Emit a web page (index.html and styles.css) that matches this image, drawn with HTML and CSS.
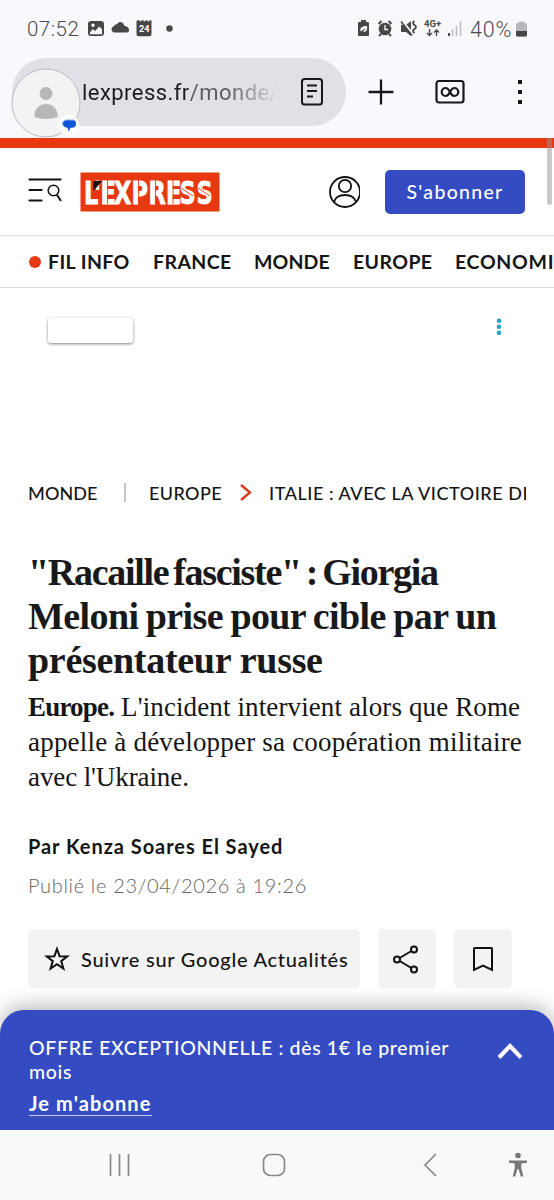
FILE: index.html
```html
<!DOCTYPE html>
<html lang="fr">
<head>
    <meta charset="UTF-8">
    <meta name="viewport" content="width=device-width, initial-scale=1.0">
    <title>L'Express</title>
    <link rel="stylesheet" href="styles.css">
</head>
<body>
    <div class="browser">
        <div class="status-bar">
            <span class="time">07:52</span>
            <svg class="status-left" width="92" height="20" viewBox="0 0 92 20" fill="#47474a">
                <path fill-rule="evenodd" d="M3 2h10q3 0 3 3v9q0 3-3 3H3q-3 0-3-3V5q0-3 3-3zM2 13.500v1.800h12v-5l-2.800-2.800-4 4.500-2.500-2zM5 4.500a1.700 1.700 0 1 0 .01 0z"/>
                <path d="M26.500 13.500a3.200 3.200 0 0 1-.5-6.300 3 3 0 0 1 3-2q2-3.200 5-1.700 2 1 2.300 3.200 4.200.5 4.700 4.300.2 2.500-2.500 2.500z"/>
                <path d="M50 2h2v1h2V2h2v1h2V2h2v1h2V2h2v14q0 2-2 2H51q-2 0-2-2V3z" transform="translate(-.5 -.8)"/>
                <text x="51" y="13" class="calendar-day">24</text>
                <circle cx="81.500" cy="9.500" r="3.200"/>
            </svg>
            <svg class="status-right" width="112" height="20" viewBox="0 0 112 20" fill="#47474a">
                <path d="M4 1h5v2h2q1 0 1 1v12q0 1-1 1H2q-1 0-1-1V4q0-1 1-1h2z"/>
                <path d="M3.500 12.500Q2 7 10 7q1 6-4 6l3-4z" fill="#fff"/>
                <circle cx="28" cy="10" r="6.300"/>
                <path d="M24 15l-2 2M32 15l2 2M21.500 5l3-3M34.500 5l-3-3" stroke="#47474a" stroke-width="2"/>
                <path d="M28 6v4.500h3" fill="none" stroke="#fff" stroke-width="1.300"/>
                <path d="M44 6h5l5-4v15l-5-4h-5z"/>
                <path d="M45 2l12 14" stroke="#f9f9fd" stroke-width="2"/>
                <path d="M44 2.500l11 14" stroke="#47474a" stroke-width="1.600"/>
                <path d="M57.500 2q-3 2 0 4t0 4 0 4" fill="none" stroke="#47474a" stroke-width="1.800"/>
                <text x="67" y="8" class="network">4G+</text>
                <path d="M72.500 10v6.500m-2.500-2.500l2.500 2.500 2.500-2.500M79.500 17v-6m-2.500 2.500l2.500-2.500 2.500 2.500" fill="none" stroke="#47474a" stroke-width="1.400"/>
                <path d="M92 14v3" stroke="#47474a" stroke-width="2"/>
                <path d="M95.500 10v7M99.500 6.500v10.500M103.500 2.500v14.500" stroke="#bdbdc1" stroke-width="1.600"/>
            </svg>
            <span class="battery-level">40%</span>
            <svg width="12" height="18" viewBox="0 0 12 18">
                <path d="M3 1.500h5V3h1.500q1.500 0 1.500 1.500V15q0 1.500-1.500 1.500h-8Q0 16.500 0 15V4.500Q0 3 1.500 3H3z" fill="#b7b7bb"/>
                <path d="M0 11h11v4q0 1.500-1.500 1.500h-8Q0 16.500 0 15z" fill="#47474a"/>
            </svg>
        </div>
        <div class="toolbar">
            <div class="address-bar">
                <span class="url">lexpress.fr<span class="path">/monde/</span></span>
                <svg width="24" height="30" viewBox="0 0 24 30" fill="none" stroke="#17171c" stroke-width="2">
                    <rect x="2" y="2" width="20" height="25.500" rx="2.500"/>
                    <path d="M7 8.500h10M7 14h10M7 19.500h6"/>
                </svg>
            </div>
            <svg class="plus" width="26" height="26" viewBox="0 0 26 26" stroke="#17171c" stroke-width="2.300">
                <path d="M13 .5v25M.5 13h25"/>
            </svg>
            <svg class="tabs" width="30" height="26" viewBox="0 0 30 26" fill="none" stroke="#17171c">
                <rect x="1.500" y="2" width="27" height="21.500" rx="2.500" stroke-width="2.200"/>
                <path d="M15 13Q13 9 10.700 9A3.900 3.900 0 0 0 10.700 17Q13 17 15 13T19.300 9A3.900 3.900 0 0 1 19.300 17Q17 17 15 13z" stroke-width="2.200"/>
            </svg>
            <svg class="more" width="6" height="26" viewBox="0 0 6 26" fill="#17171c">
                <path d="M1 1h4v4H1zM1 11h4v4H1zM1 21h4v4H1z"/>
            </svg>
        </div>
        <div class="chat-head">
            <svg width="70" height="70" viewBox="0 0 70 70">
                <circle cx="35" cy="35" r="34" fill="#f3f3f3" stroke="#bcbcbc"/>
                <circle cx="35" cy="25.500" r="6.500" fill="#b5b8b7"/>
                <path d="M23.500 49v-2a11.500 11 0 0 1 23 0v2q-11.500 4-23 0z" fill="#b5b8b7"/>
                <circle cx="58" cy="57.500" r="10.500" fill="#fff"/>
                <path d="M55 51.500h7q3 0 3 3t-3 4h-4.500q-7 0-6.500-3t4-4z" fill="#7aa5f8"/>
                <path d="M56 52.500h5q4 0 4 3.500t-4 3.700h-1.500l-1.800 4-1-4q-4.500 0-4.500-3.700t3.800-3.500z" fill="#1056d8"/>
            </svg>
        </div>
    </div>

    <header class="site-header">
        <svg width="36" height="28" viewBox="0 0 36 28" fill="none" stroke="#111">
            <path d="M2.500 1.500h31M2.500 12h12M2.500 22.500h12" stroke-width="2.200" stroke-linecap="round"/>
            <circle cx="26.500" cy="12.500" r="5.300" stroke-width="1.500"/>
            <path d="M30 17l4 6" stroke-width="2"/>
        </svg>
        <svg class="logo" width="140" height="40" viewBox="0 0 140 40">
            <rect x=".5" y=".5" width="139" height="39" fill="#e8380f"/>
            <text transform="translate(0 32) scale(1 1.300)" x="4 14 20.500 34 51.500 68.500 86 99.500 116.500" y="0">L'EXPRESS</text>
            <path d="M27.600 8v24M58.600 8v24M75.600 8v24M93.100 8v24M101 16l12 8M118 16l12 8" stroke="#e8380f" stroke-width=".9"/>
            <path d="M13.500 9h8.500l-8.500 10z" fill="#111"/>
        </svg>
        <svg class="account" width="32" height="34" viewBox="0 0 32 34" fill="none" stroke="#111" stroke-width="1.800">
            <circle cx="17" cy="17" r="15"/>
            <circle cx="17" cy="11" r="6.200"/>
            <path d="M6 27q2-7 11-7t11 7"/>
        </svg>
        <a class="subscribe">S'abonner</a>
    </header>
    <nav class="main-nav">
        <a class="live">FIL INFO</a>
        <a class="france">FRANCE</a>
        <a class="monde">MONDE</a>
        <a class="europe">EUROPE</a>
        <a class="economie">ECONOMIE</a>
    </nav>

    <div class="ad">
        <div class="ad-label"></div>
        <svg width="6" height="18" viewBox="0 0 6 18" fill="#22a5c5">
            <circle cx="3" cy="2.800" r="2.300"/>
            <circle cx="3" cy="8.800" r="2.300"/>
            <circle cx="3" cy="14.800" r="2.300"/>
        </svg>
    </div>

    <main class="article">
        <div class="breadcrumb">
            <a class="crumb-monde">MONDE</a>
            <span class="separator"></span>
            <a class="crumb-europe">EUROPE</a>
            <svg width="12" height="18" viewBox="0 0 12 18" fill="none" stroke="#dc3a1c" stroke-width="2.400">
                <path d="M1 1l9 7.500L1 16"/>
            </svg>
            <a class="crumb-tag">ITALIE : AVEC LA VICTOIRE DE</a>
        </div>
        <h1>
            <span class="t1">"Racaille fasciste" : Giorgia</span>
            <span class="t2">Meloni prise pour cible par un</span>
            <span class="t3">présentateur russe</span>
        </h1>
        <p class="lead">
            <span class="l1"><strong>Europe.</strong> L'incident intervient alors que Rome</span>
            <span class="l2">appelle à développer sa coopération militaire</span>
            <span class="l3">avec l'Ukraine.</span>
        </p>
        <p class="author">Par Kenza Soares El Sayed</p>
        <p class="date">Publié le 23/04/2026 à 19:26</p>
        <div class="actions">
            <a class="follow">
                <svg width="26" height="26" viewBox="0 0 26 26" fill="none" stroke="#111" stroke-width="2">
                    <path d="M13 3l2.600 7.200 7.700.2-6.100 4.700 2.200 7.400-6.400-4.300-6.400 4.300 2.200-7.400-6.100-4.700 7.700-.2z"/>
                </svg>
                <span>Suivre sur Google Actualités</span>
            </a>
            <a class="icon-btn">
                <svg width="28" height="30" viewBox="0 0 28 30" fill="none" stroke="#111" stroke-width="2">
                    <circle cx="4" cy="15.500" r="3"/>
                    <circle cx="21" cy="5.500" r="3"/>
                    <circle cx="21" cy="25.500" r="3"/>
                    <path d="M6.600 14L18.400 7M6.600 17l11.800 7"/>
                </svg>
            </a>
            <a class="icon-btn">
                <svg width="22" height="28" viewBox="0 0 22 28" fill="none" stroke="#111" stroke-width="2">
                    <path d="M2 25V3.500Q2 3 2.500 3h17q.5 0 .5.500V25l-9-4.300z"/>
                </svg>
            </a>
        </div>
    </main>

    <div class="offer">
        <div class="offer-text">
            <p><span class="offer-title">OFFRE EXCEPTIONNELLE : dès 1€ le premier</span> mois</p>
            <a>Je m'abonne</a>
        </div>
        <svg width="26" height="18" viewBox="0 0 26 18" fill="none" stroke="#fff" stroke-width="4">
            <path d="M2 15.500L13 4l11 11.500"/>
        </svg>
    </div>

    <div class="system-nav">
        <svg class="recents" width="22" height="24" viewBox="0 0 22 24" stroke="#89898d" stroke-width="1.700">
            <path d="M2.500 1v22M11.500 1v22M20.500 1v22"/>
        </svg>
        <svg class="home" width="24" height="24" viewBox="0 0 24 24" fill="none" stroke="#89898d" stroke-width="1.700">
            <rect x="1.500" y="1.500" width="21" height="21" rx="7"/>
        </svg>
        <svg class="back" width="14" height="24" viewBox="0 0 14 24" fill="none" stroke="#89898d" stroke-width="1.700">
            <path d="M13 1L2 12l11 11"/>
        </svg>
        <svg class="access" width="20" height="26" viewBox="0 0 20 26" fill="#77777b">
            <circle cx="10" cy="3.500" r="2.800"/>
            <path d="M1 8.500h18v2.300l-5.700.8V16l2 8.500h-2.500L10.500 17h-1l-2.300 7.500H4.700l2-8.500v-4.400L1 10.800z"/>
        </svg>
    </div>
    <div class="scrollbar"></div>
</body>
</html>
```
FILE: styles.css
```css
* {
    box-sizing: border-box;
}
body {
    position: relative;
    width: 554px;
    height: 1200px;
    margin: 0;
    overflow: hidden;
    background-color: #fff;
    color: #151515;
    font-family: Lato, sans-serif;
}
p, h1 {
    margin: 0;
}
svg {
    display: block;
    flex-shrink: 0;
}

/* Navigateur */
.browser {
    position: relative;
    height: 138px;
    background-color: #f9f9fd;
}
.status-bar {
    display: flex;
    align-items: center;
    height: 58px;
    padding: 0 26px 0 27px;
    color: #4b4b4e;
    font-family: Roboto, sans-serif;
    font-size: 20.5px;
    font-weight: 300;
}
.time {
    width: 61px;
    letter-spacing: 0.5px;
}
.status-right {
    margin-left: auto;
    margin-right: 1px;
}
.battery-level {
    width: 46px;
    font-size: 21.5px;
    letter-spacing: 0.8px;
}
.calendar-day {
    fill: #fff;
    font: bold 9px Roboto, sans-serif;
}
.network {
    font: bold 9.5px Roboto, sans-serif;
}
.toolbar {
    display: flex;
    align-items: center;
    height: 68px;
    padding-left: 12px;
}
.address-bar {
    display: flex;
    align-items: center;
    width: 334px;
    height: 68px;
    padding-left: 70px;
    border-radius: 34px;
    background-color: #e1e0e6;
}
.url {
    width: 195px;
    margin-right: 23px;
    overflow: hidden;
    color: #1c1b20;
    font-family: Roboto, sans-serif;
    font-size: 22px;
    letter-spacing: 0.45px;
    white-space: nowrap;
    -webkit-mask-image: linear-gradient(to right, #000 75%, transparent);
    mask-image: linear-gradient(to right, #000 75%, transparent);
}
.path {
    color: #5c5c62;
}
.plus {
    margin-left: 22px;
}
.tabs {
    margin-left: 41px;
}
.more {
    margin-left: 52px;
}
.chat-head {
    position: absolute;
    top: 68px;
    left: 11px;
}

/* En-tête */
.site-header {
    display: flex;
    align-items: center;
    height: 98px;
    padding: 0 29px 0 27px;
    border-top: 10px solid #e8380f;
    border-bottom: 1px solid #dcdcdc;
}
.logo {
    margin-left: 17px;
}
.logo text {
    fill: #fff;
    stroke: #fff;
    stroke-width: 0.6px;
    font-family: "DejaVu Sans Condensed", "DejaVu Sans", sans-serif;
    font-size: 25px;
    font-weight: bold;
}
.account {
    margin-left: 108px;
}
.subscribe {
    width: 140px;
    height: 44px;
    margin-left: auto;
    border-radius: 5px;
    background-color: #344bc2;
    color: #fff;
    font-size: 19.5px;
    font-weight: 500;
    letter-spacing: 1.3px;
    line-height: 44px;
    text-align: center;
}
.main-nav {
    display: flex;
    align-items: center;
    height: 52px;
    padding-left: 29px;
    overflow: hidden;
    border-bottom: 1px solid #dcdcdc;
    font-size: 19.5px;
    font-weight: bold;
    letter-spacing: 0.4px;
    white-space: nowrap;
}
.main-nav a {
    flex-shrink: 0;
}
.live {
    display: flex;
    align-items: center;
    width: 124px;
}
.live::before {
    content: "";
    width: 12px;
    height: 12px;
    margin-right: 7px;
    border-radius: 50%;
    background-color: #e63a14;
}
.france {
    width: 101px;
}
.monde {
    width: 99px;
    letter-spacing: 0.1px;
}
.europe {
    width: 102px;
}
.economie {
    letter-spacing: 0.7px;
}

/* Publicité */
.ad {
    display: flex;
    justify-content: space-between;
    align-items: flex-start;
    height: 182px;
    padding: 30px 52px 0 48px;
}
.ad-label {
    width: 85px;
    height: 25px;
    border-radius: 3px;
    background-color: #fff;
    box-shadow: 0 1px 3px rgba(0, 0, 0, 0.5);
}

/* Article */
.article {
    height: 540px;
    padding: 0 28px;
}
.breadcrumb {
    display: flex;
    align-items: center;
    height: 45px;
    overflow: hidden;
    font-size: 18px;
    font-weight: 500;
    white-space: nowrap;
}
.breadcrumb > * {
    flex-shrink: 0;
}
.crumb-monde {
    width: 96px;
    letter-spacing: 0.1px;
}
.separator {
    width: 2px;
    height: 19px;
    margin-right: 23px;
    background-color: #c6c6c6;
}
.crumb-europe {
    width: 91px;
    letter-spacing: 0.4px;
}
.crumb-tag {
    margin-left: 17px;
    letter-spacing: 0.55px;
}
h1 {
    margin-top: 35px;
    color: #191919;
    font-family: "Liberation Serif", serif;
    font-size: 38px;
    line-height: 44px;
}
h1 span,
.lead > span {
    display: block;
    white-space: nowrap;
}
.t1 {
    letter-spacing: -1.3px;
    word-spacing: -3.2px;
}
.t2 {
    letter-spacing: -0.6px;
    word-spacing: -1.5px;
}
.t3 {
    letter-spacing: -0.3px;
}
.lead {
    margin-top: 8px;
    font-family: "Liberation Serif", serif;
    font-size: 27px;
    line-height: 35.2px;
}
.lead strong {
    letter-spacing: -0.8px;
}
.l1 {
    letter-spacing: 0.12px;
}
.l2 {
    letter-spacing: 0.2px;
}
.l3 {
    letter-spacing: -0.1px;
}
.author {
    margin-top: 38px;
    font-size: 20px;
    font-weight: bold;
    letter-spacing: 0.95px;
    line-height: 24px;
}
.date {
    margin-top: 15px;
    color: #666;
    font-size: 20px;
    font-weight: 300;
    letter-spacing: 0.67px;
    line-height: 24px;
}
.actions {
    display: flex;
    gap: 17.5px;
    margin-top: 32.4px;
}
.actions a {
    display: flex;
    align-items: center;
    height: 59px;
    border-radius: 5px;
    background-color: #f3f3f3;
}
.follow {
    gap: 11px;
    width: 332px;
    padding-left: 16px;
    font-size: 20px;
    font-weight: 500;
    letter-spacing: 0.75px;
    white-space: nowrap;
}
.icon-btn {
    justify-content: center;
    width: 58.5px;
}

/* Offre */
.offer {
    position: relative;
    display: flex;
    justify-content: space-between;
    height: 120px;
    padding: 26px 31px 0 29px;
    border-radius: 24px 24px 0 0;
    background-color: #344bc2;
    box-shadow: 0 -4px 20px rgba(0, 0, 0, 0.28);
    color: #fff;
    font-size: 19.5px;
    font-weight: 500;
    letter-spacing: 0.65px;
    line-height: 24px;
}
.offer-text {
    width: 430px;
}
.offer-title {
    display: block;
    white-space: nowrap;
}
.offer a {
    display: inline-block;
    margin-top: 8px;
    border-bottom: 1px solid #c4cbf0;
    font-size: 20px;
    font-weight: bold;
    letter-spacing: 1.1px;
    line-height: 23px;
}
.offer svg {
    margin-top: 6px;
}

/* Barre système */
.system-nav {
    position: relative;
    display: flex;
    align-items: center;
    height: 70px;
    padding-left: 108px;
    background-color: #f9f9fc;
}
.home {
    margin-left: 132px;
}
.back {
    margin-left: 137px;
}
.access {
    margin-left: 71px;
}
.scrollbar {
    position: absolute;
    top: 138px;
    right: 2px;
    width: 5px;
    height: 67px;
    border-radius: 0 0 3px 3px;
    background-color: rgba(150, 150, 150, 0.5);
}
```
